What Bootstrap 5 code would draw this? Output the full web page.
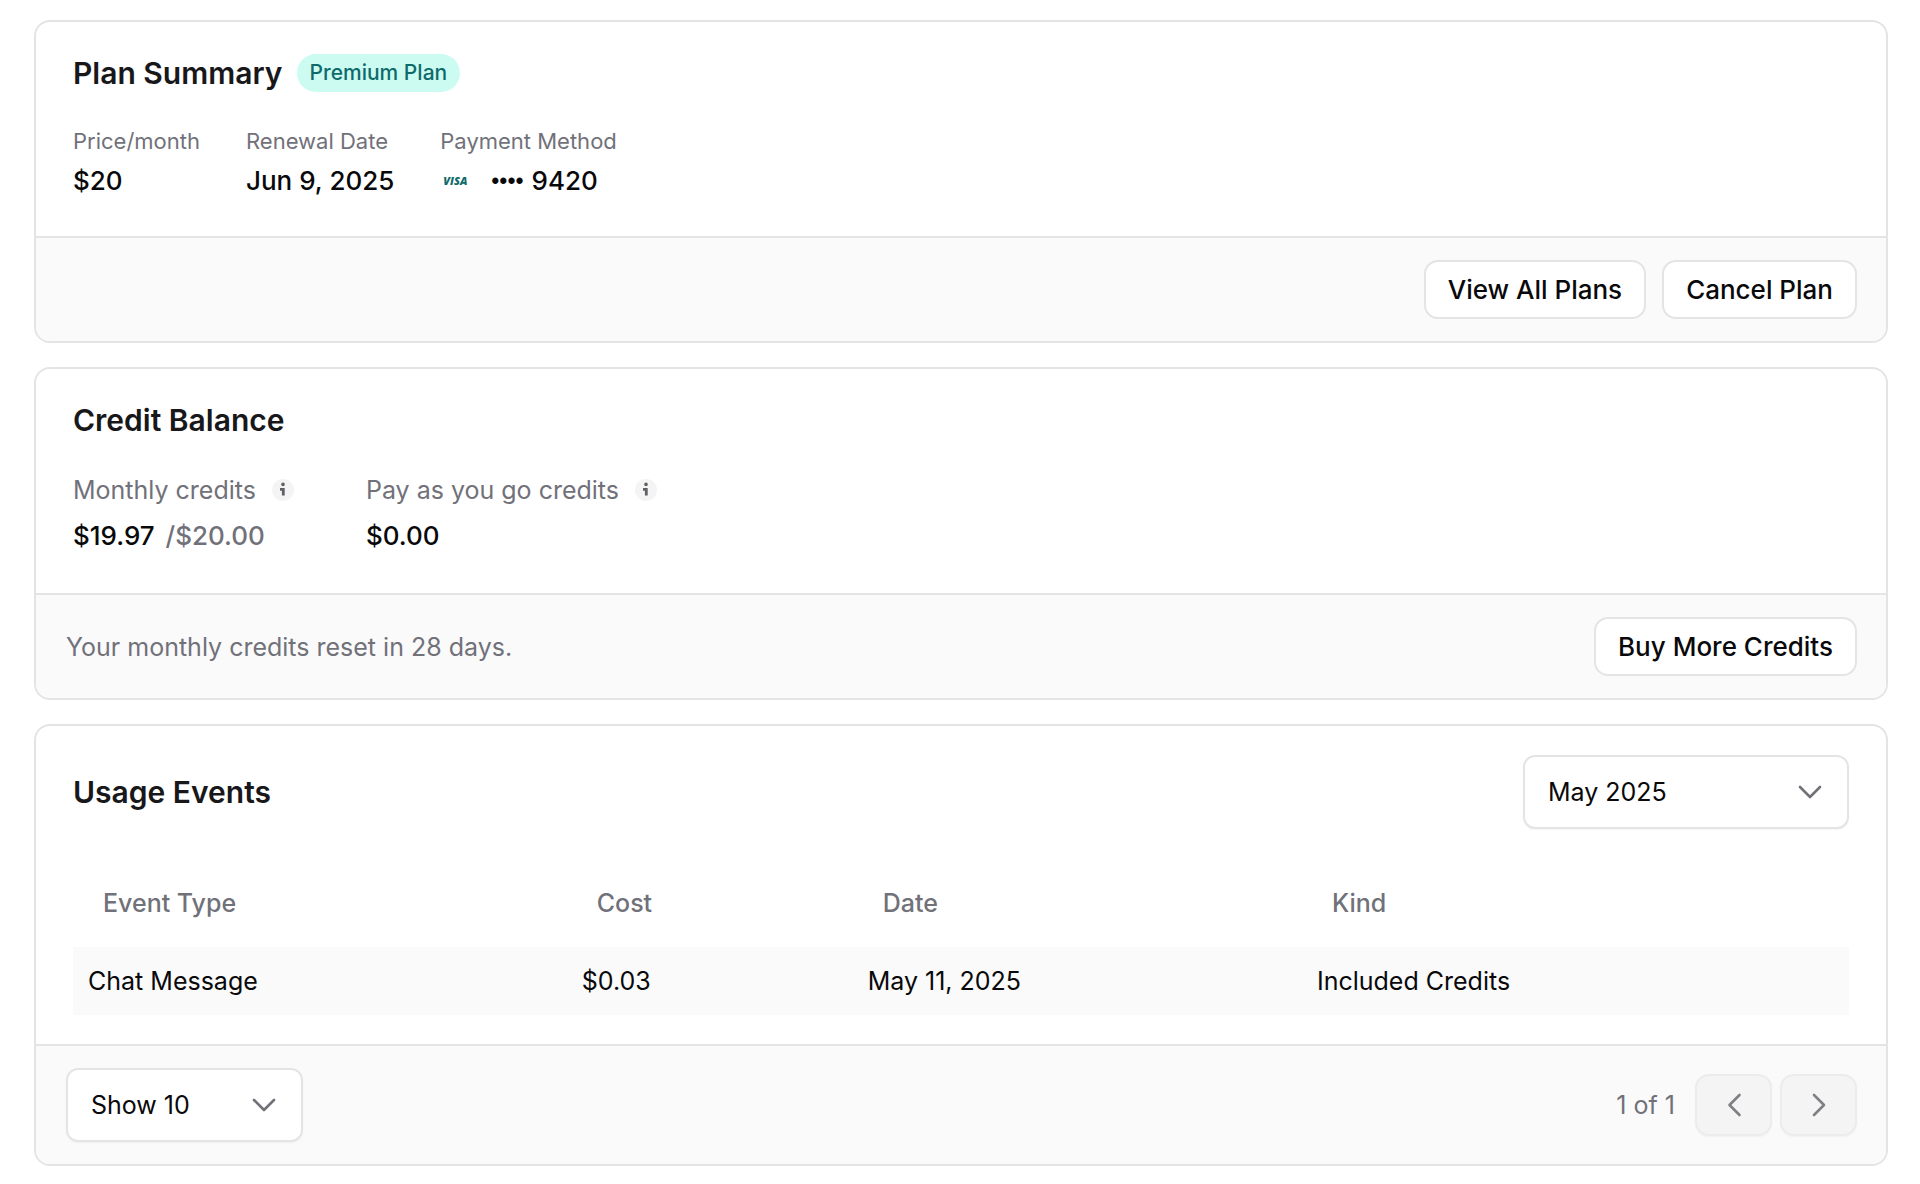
<!DOCTYPE html>
<html lang="en">
<head>
<meta charset="utf-8">
<meta name="viewport" content="width=device-width, initial-scale=1">
<title>Billing and Usage</title>
<link href="https://cdn.jsdelivr.net/npm/bootstrap@5.3.0/dist/css/bootstrap.min.css" rel="stylesheet">
<style>
  body { font-family: Inter, "Liberation Sans", sans-serif; font-size: 25px; line-height: 36px; color: #09090b; background: #fff; }
  .page { padding: 20px 32px 18px 34px; display: grid; gap: 24px; }
  .panel { --bs-card-border-color: #e4e4e7; --bs-card-border-width: 2px; --bs-card-border-radius: 16px; --bs-card-inner-border-radius: 14px; --bs-card-cap-bg: #fafafa; --bs-card-color: #09090b; }
  .panel .card-body { padding: 31px 37px 37px; }
  .panel .credit-body { padding-bottom: 39px; }
  .panel .events-body { padding: 29px 37px; }
  .panel .card-footer { padding: 22px 29px 22px 30px; }
  .panel .card-title { font-size: 30px; line-height: 40px; font-weight: 600; color: #18181b; }
  .plan-badge { background: #ccfbf1; color: #0f6b6b; font-size: 21px; line-height: 28px; font-weight: 500; padding: 5px 13px; }
  .panel-head { gap: 14px; margin-bottom: 32px; }
  .muted { color: #71717a; }
  .caption { font-size: 22px; line-height: 32px; }
  .value { font-size: 26px; font-weight: 500; }
  .plan-facts { gap: 46px; }
  .plan-facts .value { margin-top: 6px; }
  .credit-facts { gap: 72px; }
  .credit-facts .value { margin-top: 10px; }
  .btn-line { --bs-btn-font-size: 26px; --bs-btn-line-height: 35px; --bs-btn-font-weight: 500; --bs-btn-padding-x: 22px; --bs-btn-padding-y: 10px; --bs-btn-border-radius: 14px; --bs-btn-border-width: 2px; --bs-btn-border-color: #e4e4e7; --bs-btn-bg: #fff; --bs-btn-color: #09090b; --bs-btn-hover-bg: #f4f4f5; --bs-btn-hover-border-color: #e4e4e7; }
  .visa { font-family: "Open Sans", sans-serif; font-size: 11px; line-height: 16px; font-weight: 800; font-style: italic; color: #0f6b6b; padding: 0 3px; width: 51px; }
  .dots { font-family: "Liberation Sans", sans-serif; font-size: 23px; }
  .info { width: 22px; height: 22px; }
  .select-line { font-size: 25px; line-height: 36px; color: #09090b; border: 2px solid #e4e4e7; border-radius: 12px; box-shadow: 0 1px 2px rgba(0, 0, 0, .04); padding: 17px 60px 17px 23px; background-image: url("data:image/svg+xml,%3Csvg xmlns='http://www.w3.org/2000/svg' viewBox='0 0 24 24' fill='none' stroke='%2371717a' stroke-width='2.6' stroke-linecap='round' stroke-linejoin='round'%3E%3Cpath d='M2 7l10 10L22 7'/%3E%3C/svg%3E"); background-size: 24px 24px; background-position: right 25px center; }
  .month { width: 326px; }
  .size { width: 237px; }
  .events { --bs-table-bg: transparent; --bs-table-color: #09090b; table-layout: fixed; margin: 40px 0 0; }
  .events th { font-weight: 500; color: #71717a; padding: 16px 30px 26px; border: 0; }
  .events td { background: #fafafa; padding: 16px 15px; border: 0; }
  .col-event { width: 27.8%; }
  .col-cost { width: 16.1%; }
  .col-date { width: 25.3%; }
  .page-count { margin-right: 12px; }
  .pager { width: 77px; height: 62px; box-shadow: 0 1px 2px rgba(0, 0, 0, .04); --bs-btn-padding-x: 0; --bs-btn-padding-y: 0; --bs-btn-border-radius: 14px; --bs-btn-border-width: 2px; --bs-btn-disabled-bg: #f4f4f5; --bs-btn-disabled-border-color: #ececee; --bs-btn-disabled-color: #808084; --bs-btn-disabled-opacity: 1; }
  .pager svg { display: block; margin: 0 auto; }
</style>
</head>
<body>
<main class="page">
  <section class="card panel">
    <div class="card-body">
      <div class="d-flex align-items-center panel-head">
        <h2 class="card-title mb-0">Plan Summary</h2>
        <span class="badge rounded-pill plan-badge">Premium Plan</span>
      </div>
      <div class="d-flex plan-facts">
        <div><div class="caption muted">Price/month</div><div class="value">$20</div></div>
        <div><div class="caption muted">Renewal Date</div><div class="value">Jun 9, 2025</div></div>
        <div><div class="caption muted">Payment Method</div>
          <div class="value d-flex align-items-center"><span class="visa">VISA</span><span class="dots me-2">••••</span>9420</div></div>
      </div>
    </div>
    <div class="card-footer d-flex justify-content-end gap-3">
      <button type="button" class="btn btn-line">View All Plans</button>
      <button type="button" class="btn btn-line">Cancel Plan</button>
    </div>
  </section>

  <section class="card panel">
    <div class="card-body credit-body">
      <div class="panel-head"><h2 class="card-title mb-0">Credit Balance</h2></div>
      <div class="d-flex credit-facts">
        <div><div class="muted d-flex align-items-center gap-3">Monthly credits
          <svg class="info" viewBox="0 0 22 22" aria-hidden="true"><circle cx="11" cy="11" r="11" fill="#f4f4f5"/><circle cx="11" cy="5.400" r="1.800" fill="#5f5f66"/><path d="M8 10.300h3.300v6.300" fill="none" stroke="#5f5f66" stroke-width="2.800"/></svg></div>
          <div class="value">$19.97 <span class="muted ms-1">/$20.00</span></div></div>
        <div><div class="muted d-flex align-items-center gap-3">Pay as you go credits
          <svg class="info" viewBox="0 0 22 22" aria-hidden="true"><circle cx="11" cy="11" r="11" fill="#f4f4f5"/><circle cx="11" cy="5.400" r="1.800" fill="#5f5f66"/><path d="M8 10.300h3.300v6.300" fill="none" stroke="#5f5f66" stroke-width="2.800"/></svg></div>
          <div class="value">$0.00</div></div>
      </div>
    </div>
    <div class="card-footer d-flex justify-content-between align-items-center">
      <span class="muted">Your monthly credits reset in 28 days.</span>
      <button type="button" class="btn btn-line">Buy More Credits</button>
    </div>
  </section>

  <section class="card panel">
    <div class="card-body events-body">
      <div class="d-flex justify-content-between align-items-center">
        <h2 class="card-title mb-0">Usage Events</h2>
        <select class="form-select select-line month" aria-label="Month"><option>May 2025</option></select>
      </div>
      <table class="table events">
        <colgroup><col class="col-event"><col class="col-cost"><col class="col-date"><col></colgroup>
        <thead><tr><th scope="col">Event Type</th><th scope="col">Cost</th><th scope="col">Date</th><th scope="col">Kind</th></tr></thead>
        <tbody><tr><td>Chat Message</td><td>$0.03</td><td>May 11, 2025</td><td>Included Credits</td></tr></tbody>
      </table>
    </div>
    <div class="card-footer d-flex justify-content-between align-items-center">
      <select class="form-select select-line size" aria-label="Rows per page"><option>Show 10</option></select>
      <div class="d-flex align-items-center gap-2">
        <span class="muted page-count">1 of 1</span>
        <button type="button" class="btn pager" disabled aria-label="Previous page"><svg width="24" height="24" viewBox="0 0 24 24" fill="none" stroke="currentColor" stroke-width="2.600" stroke-linecap="round" stroke-linejoin="round"><path d="M17.500 2L7.500 12l10 10"/></svg></button>
        <button type="button" class="btn pager" disabled aria-label="Next page"><svg width="24" height="24" viewBox="0 0 24 24" fill="none" stroke="currentColor" stroke-width="2.600" stroke-linecap="round" stroke-linejoin="round"><path d="M7 2l10 10L7 22"/></svg></button>
      </div>
    </div>
  </section>
</main>
<script src="https://cdn.jsdelivr.net/npm/bootstrap@5.3.0/dist/js/bootstrap.bundle.min.js"></script>
</body>
</html>
